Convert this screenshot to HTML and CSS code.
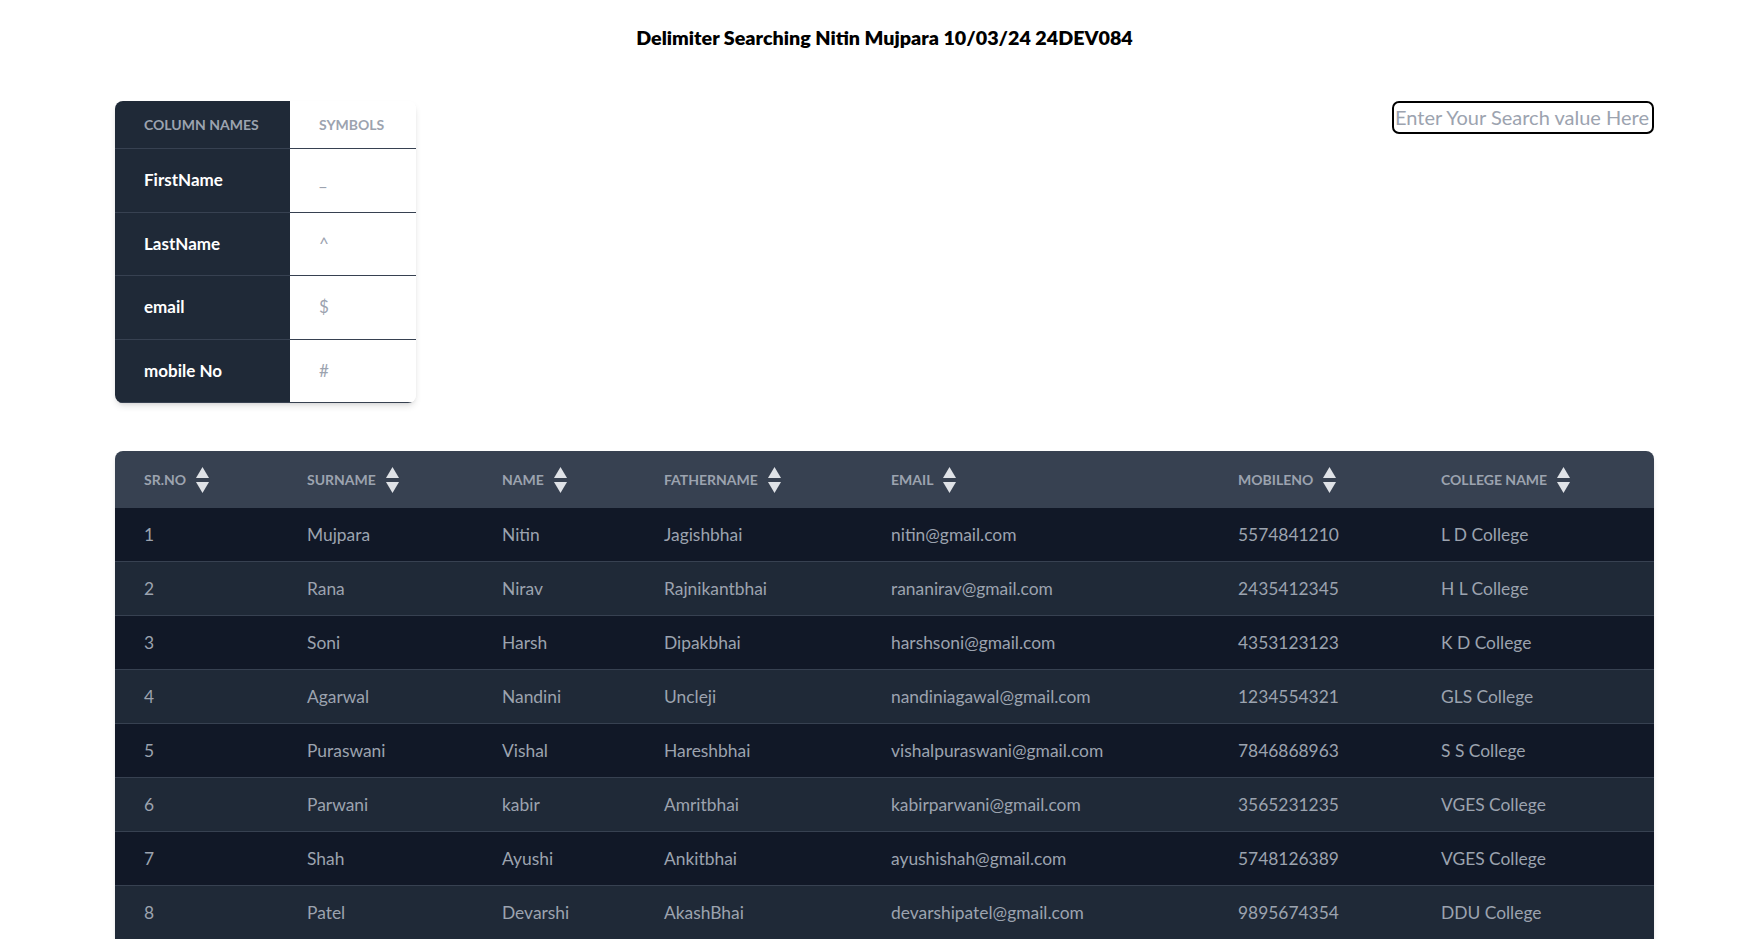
FILE: index.html
```html
<!DOCTYPE html>
<html lang="en">
<head>
<meta charset="utf-8">
<title>Delimiter Searching</title>
<link rel="stylesheet" href="styles.css">
</head>
<body>
<div class="page">
  <h1 class="title">Delimiter Searching Nitin Mujpara 10/03/24 24DEV084</h1>

  <div class="top">
    <div class="legend-wrap">
      <table class="legend">
        <thead>
          <tr>
            <th class="lg-name">Column Names</th>
            <th class="lg-sym">Symbols</th>
          </tr>
        </thead>
        <tbody>
          <tr><th class="lg-name">FirstName</th><td class="lg-sym">_</td></tr>
          <tr><th class="lg-name">LastName</th><td class="lg-sym">^</td></tr>
          <tr><th class="lg-name">email</th><td class="lg-sym">$</td></tr>
          <tr><th class="lg-name">mobile No</th><td class="lg-sym">#</td></tr>
        </tbody>
      </table>
    </div>
    <input class="search" type="text" placeholder="Enter Your Search value Here">
  </div>

  <div class="data-wrap">
    <table class="data">
      <thead>
        <tr>
          <th class="c-sr"><span class="th-in">Sr.No <svg class="sort" viewBox="0 0 13 26"><path d="M6.5 0L13 11H0z"/><path d="M0 15h13L6.5 26z"/></svg></span></th>
          <th class="c-sur"><span class="th-in">Surname <svg class="sort" viewBox="0 0 13 26"><path d="M6.5 0L13 11H0z"/><path d="M0 15h13L6.5 26z"/></svg></span></th>
          <th class="c-name"><span class="th-in">Name <svg class="sort" viewBox="0 0 13 26"><path d="M6.5 0L13 11H0z"/><path d="M0 15h13L6.5 26z"/></svg></span></th>
          <th class="c-father"><span class="th-in">Fathername <svg class="sort" viewBox="0 0 13 26"><path d="M6.5 0L13 11H0z"/><path d="M0 15h13L6.5 26z"/></svg></span></th>
          <th class="c-email"><span class="th-in">Email <svg class="sort" viewBox="0 0 13 26"><path d="M6.5 0L13 11H0z"/><path d="M0 15h13L6.5 26z"/></svg></span></th>
          <th class="c-mobile"><span class="th-in">Mobileno <svg class="sort" viewBox="0 0 13 26"><path d="M6.5 0L13 11H0z"/><path d="M0 15h13L6.5 26z"/></svg></span></th>
          <th class="c-college"><span class="th-in">College Name <svg class="sort" viewBox="0 0 13 26"><path d="M6.5 0L13 11H0z"/><path d="M0 15h13L6.5 26z"/></svg></span></th>
        </tr>
      </thead>
      <tbody>
        <tr><td>1</td><td>Mujpara</td><td>Nitin</td><td>Jagishbhai</td><td>nitin@gmail.com</td><td>5574841210</td><td>L D College</td></tr>
        <tr><td>2</td><td>Rana</td><td>Nirav</td><td>Rajnikantbhai</td><td>rananirav@gmail.com</td><td>2435412345</td><td>H L College</td></tr>
        <tr><td>3</td><td>Soni</td><td>Harsh</td><td>Dipakbhai</td><td>harshsoni@gmail.com</td><td>4353123123</td><td>K D College</td></tr>
        <tr><td>4</td><td>Agarwal</td><td>Nandini</td><td>Uncleji</td><td>nandiniagawal@gmail.com</td><td>1234554321</td><td>GLS College</td></tr>
        <tr><td>5</td><td>Puraswani</td><td>Vishal</td><td>Hareshbhai</td><td>vishalpuraswani@gmail.com</td><td>7846868963</td><td>S S College</td></tr>
        <tr><td>6</td><td>Parwani</td><td>kabir</td><td>Amritbhai</td><td>kabirparwani@gmail.com</td><td>3565231235</td><td>VGES College</td></tr>
        <tr><td>7</td><td>Shah</td><td>Ayushi</td><td>Ankitbhai</td><td>ayushishah@gmail.com</td><td>5748126389</td><td>VGES College</td></tr>
        <tr><td>8</td><td>Patel</td><td>Devarshi</td><td>AkashBhai</td><td>devarshipatel@gmail.com</td><td>9895674354</td><td>DDU College</td></tr>
      </tbody>
    </table>
  </div>
</div>
</body>
</html>
```

FILE: styles.css
```css
* { box-sizing: border-box; }

html, body {
  margin: 0;
  padding: 0;
  background: #ffffff;
}

body {
  font-family: "Lato", "Open Sans", sans-serif;
  color: #111827;
}

.page {
  padding: 21px 107px 40px 115px;
}

.title {
  margin: 0;
  text-align: center;
  font-size: 19.7px;
  line-height: 34px;
  font-weight: 800;
  color: #000000;
}

.top {
  margin-top: 46px;
  display: flex;
  justify-content: space-between;
  align-items: flex-start;
}

.legend-wrap {
  border-radius: 8px;
  overflow: hidden;
  box-shadow: 0 4px 7px -1px rgba(0,0,0,0.12), 0 2px 4px -2px rgba(0,0,0,0.1);
}

.legend {
  border-collapse: collapse;
  text-align: left;
}

.legend th, .legend td {
  border-bottom: 1px solid #374151;
  white-space: nowrap;
}

.legend thead th {
  padding: 14px 29px 13px;
  font-size: 14px;
  line-height: 20px;
  font-weight: 700;
  text-transform: uppercase;
  color: #9ca3af;
}

.legend tbody th, .legend tbody td {
  padding: 19.3px 29px;
  font-size: 17px;
  line-height: 24px;
}

.lg-name {
  width: 175px;
  background: #1f2937;
}

.legend tbody th.lg-name {
  color: #ffffff;
  font-weight: 700;
}

.lg-sym {
  width: 126px;
  background: #ffffff;
  color: #9ca3af;
}

.search {
  width: 262px;
  height: 33px;
  padding: 0 2px 1px 1px;
  border: 2px solid #000000;
  border-radius: 7px;
  font-family: inherit;
  font-size: 20px;
  color: #111827;
  outline: none;
  background: #fff;
}

.search::placeholder {
  color: #9ca3af;
}

.data-wrap {
  margin-top: 48px;
  border-radius: 8px 8px 0 0;
  overflow: hidden;
  box-shadow: 0 4px 6px -1px rgba(0,0,0,0.1), 0 2px 4px -2px rgba(0,0,0,0.1);
}

.data {
  width: 100%;
  border-collapse: collapse;
  table-layout: fixed;
  text-align: left;
  color: #9ca3af;
}

.data thead tr {
  background: #374151;
}

.data thead th {
  padding: 15.5px 29px;
  font-size: 14px;
  line-height: 26px;
  font-weight: 700;
  text-transform: uppercase;
  color: #9ca3af;
  white-space: nowrap;
}

.th-in {
  display: inline-flex;
  align-items: center;
  gap: 10px;
  height: 26px;
}

.sort {
  width: 13px;
  height: 26px;
  fill: #dfe2e7;
  flex: none;
}

.data tbody td {
  padding: 14px 29px;
  font-size: 17.4px;
  line-height: 25px;
  border-bottom: 1px solid #374151;
  white-space: nowrap;
}

.data tbody tr:nth-child(odd) { background: #111827; }
.data tbody tr:nth-child(even) { background: #1f2937; }

.c-sr { width: 163px; }
.c-sur { width: 195px; }
.c-name { width: 162px; }
.c-father { width: 227px; }
.c-email { width: 347px; }
.c-mobile { width: 203px; }
.c-college { width: 242px; }
```
